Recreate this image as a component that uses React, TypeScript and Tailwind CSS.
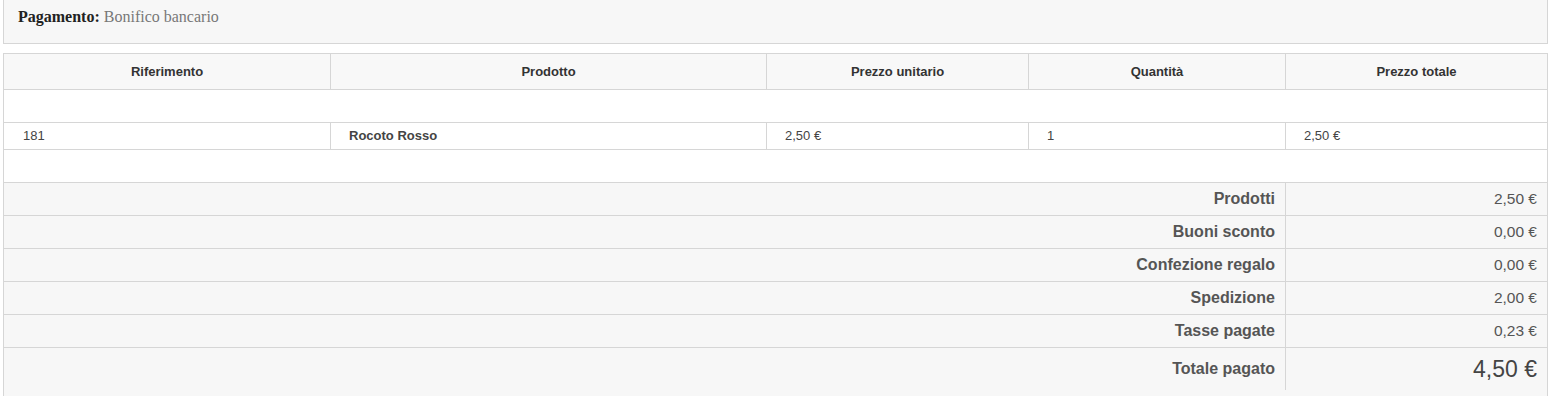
const cols = ['w-[326px]', 'w-[436px]', 'w-[262px]', 'w-[257px]', 'flex-1']

const headers = ['Riferimento', 'Prodotto', 'Prezzo unitario', 'Quantità', 'Prezzo totale']

const totals = [
    { label: 'Prodotti', value: '2,50 €' },
    { label: 'Buoni sconto', value: '0,00 €' },
    { label: 'Confezione regalo', value: '0,00 €' },
    { label: 'Spedizione', value: '2,00 €' },
    { label: 'Tasse pagate', value: '0,23 €' },
]

const App = () => {
    return (
        <div className="min-h-screen bg-white pl-[3px] pr-[11px] font-['Liberation_Sans',Arial,sans-serif] text-[#333]">
            {/* payment box */}
            <div className="h-[44px] border-x border-b border-[#d6d6d6] bg-[#f7f7f7] pl-[14px] pt-[7px] font-['Liberation_Serif','Times_New_Roman',serif] text-[16px] leading-[20px]">
                <span className="font-bold text-[#222]">Pagamento:</span>{' '}
                <span className="text-[#777]">Bonifico bancario</span>
            </div>

            <div className="mt-[9px] border-x border-t border-[#d6d6d6] text-[13px]">
                {/* header */}
                <div className="flex h-[36px] border-b border-[#d6d6d6] bg-[#f8f8f8] font-bold text-[#333]">
                    {headers.map((h, i) => (
                        <div
                            key={h}
                            className={`${cols[i]} flex items-center justify-center ${i > 0 ? 'border-l border-[#d6d6d6]' : ''}`}
                        >
                            {h}
                        </div>
                    ))}
                </div>

                <div className="h-[33px] border-b border-[#d6d6d6] bg-white" />

                {/* product row */}
                <div className="flex h-[27px] border-b border-[#d6d6d6] bg-white text-[#444]">
                    <div className={`${cols[0]} flex items-center pl-[19px]`}>181</div>
                    <div className={`${cols[1]} flex items-center border-l border-[#d6d6d6] pl-[18px] font-bold`}>
                        Rocoto Rosso
                    </div>
                    <div className={`${cols[2]} flex items-center border-l border-[#d6d6d6] pl-[18px]`}>2,50 €</div>
                    <div className={`${cols[3]} flex items-center border-l border-[#d6d6d6] pl-[18px]`}>1</div>
                    <div className={`${cols[4]} flex items-center border-l border-[#d6d6d6] pl-[18px]`}>2,50 €</div>
                </div>

                <div className="h-[33px] border-b border-[#d6d6d6] bg-white" />

                {/* totals */}
                {totals.map((t) => (
                    <div key={t.label} className="flex h-[33px] border-b border-[#d6d6d6] bg-[#f7f7f7]">
                        <div className="flex w-[1281px] items-center justify-end pr-[10px] text-[16px] font-bold text-[#555]">
                            {t.label}
                        </div>
                        <div className="flex flex-1 items-center justify-end border-l border-[#d6d6d6] pr-[10px] text-[15.5px] text-[#555]">
                            {t.value}
                        </div>
                    </div>
                ))}
                <div className="flex h-[49px] bg-[#f7f7f7]">
                    <div className="flex h-[42px] w-[1281px] items-center justify-end pr-[10px] text-[16px] font-bold text-[#555]">
                        Totale pagato
                    </div>
                    <div className="flex h-[42px] flex-1 items-center justify-end border-l border-[#d6d6d6] pr-[10px] text-[23px] text-[#444]">
                        4,50 €
                    </div>
                </div>
            </div>
        </div>
    )
}

export default App
